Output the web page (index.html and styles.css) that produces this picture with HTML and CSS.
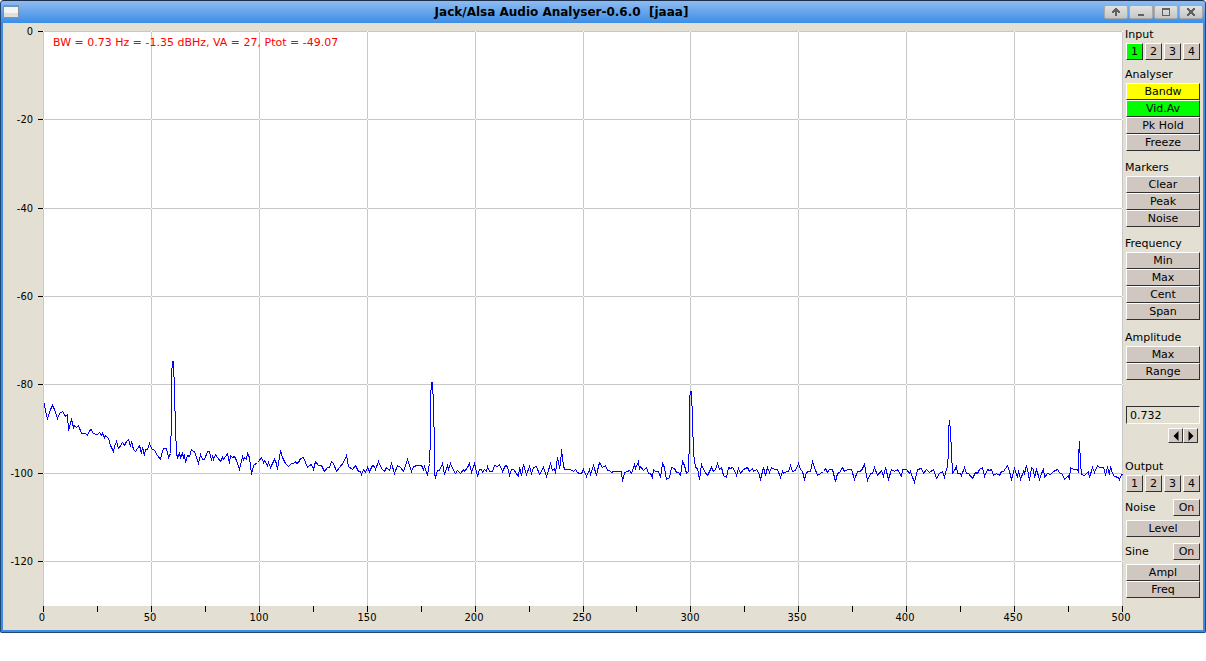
FILE: index.html
```html
<!DOCTYPE html>
<html lang="en">
<head>
    <meta charset="UTF-8">
    <meta name="viewport" content="width=device-width, initial-scale=1.0">
    <title>Jack/Alsa Audio Analyser-0.6.0 [jaaa]</title>
    <link rel="stylesheet" href="styles.css">
</head>
<body>
    <div class="window">
        <header class="titlebar">
            <svg class="app-icon" width="16" height="14" viewBox="0 0 16 14">
                <rect x="0" y="0" width="16" height="13" rx="1" fill="#8a8f94"/>
                <rect x="1" y="1" width="14" height="11" fill="#f4f4f0"/>
                <rect x="1" y="1" width="14" height="1" fill="#6b93c4"/>
                <rect x="1" y="8" width="14" height="4" fill="#dfe0da"/>
            </svg>
            <h1>Jack/Alsa Audio Analyser-0.6.0  [jaaa]</h1>
            <div class="window-buttons">
                <button type="button" aria-label="Shade">
                    <svg width="10" height="10" viewBox="0 0 10 10"><path d="M4 9V5H3v1H1V4h1V3h1V2h1V1h2v1h1v1h1v1h1v2H7V5H6v4z" fill="#606060"/></svg>
                </button>
                <button type="button" aria-label="Minimize">
                    <svg width="10" height="10" viewBox="0 0 10 10"><rect x="2" y="7" width="6" height="2" fill="#606060"/></svg>
                </button>
                <button type="button" aria-label="Maximize">
                    <svg width="10" height="10" viewBox="0 0 10 10"><path d="M1 1h8v8H1zM2 3v5h6V3z" fill="#606060" fill-rule="evenodd"/></svg>
                </button>
                <button type="button" aria-label="Close">
                    <svg width="10" height="10" viewBox="0 0 10 10"><path d="M1 1h2v1h1v1h2V2h1V1h2v2H8v1H7v2h1v1h1v2H7V8H6V7H4v1H3v1H1V7h1V6h1V4H2V3H1z" fill="#606060"/></svg>
                </button>
            </div>
        </header>

        <main class="content">
            <svg class="plot" viewBox="3 23 1120 607" role="img" aria-label="Spectrum">
                <defs>
                    <path id="dots" d="M43 0h1M151 0h1M259 0h1M367 0h1M475 0h1M583 0h1M690 0h1M798 0h1M906 0h1M1014 0h1M1122 0h1"/>
                </defs>
                <rect class="plot-area" x="43" y="31" width="1080" height="575"/>

                <!-- grid -->
                <path class="grid" d="M43 31.5H1123M43 119.5H1123M43 208.5H1123M43 296.5H1123M43 384.5H1123M43 473.5H1123M43 561.5H1123"/>
                <path class="grid" d="M43.5 31V606M151.5 31V606M259.5 31V606M367.5 31V606M475.5 31V606M583.5 31V606M690.5 31V606M798.5 31V606M906.5 31V606M1014.5 31V606M1122.5 31V606"/>
                <g class="crossings">
                    <use href="#dots" y="31.5"/>
                    <use href="#dots" y="119.5"/>
                    <use href="#dots" y="208.5"/>
                    <use href="#dots" y="296.5"/>
                    <use href="#dots" y="384.5"/>
                    <use href="#dots" y="473.5"/>
                    <use href="#dots" y="561.5"/>
                </g>

                <!-- ticks -->
                <path class="ticks" d="M38 31.5h5M38 119.5h5M38 208.5h5M38 296.5h5M38 384.5h5M38 473.5h5M38 561.5h5"/>
                <path class="ticks" d="M43.5 606v6M97.5 606v6M151.5 606v6M205.5 606v6M259.5 606v6M313.5 606v6M367.5 606v6M421.5 606v6M475.5 606v6M529.5 606v6M583.5 606v6M636.5 606v6M690.5 606v6M744.5 606v6M798.5 606v6M852.5 606v6M906.5 606v6M960.5 606v6M1014.5 606v6M1068.5 606v6M1122.5 606v6"/>

                <g class="labels-y">
                    <text x="33" y="35">0</text>
                    <text x="33" y="123">-20</text>
                    <text x="33" y="212">-40</text>
                    <text x="33" y="300">-60</text>
                    <text x="33" y="388">-80</text>
                    <text x="33" y="477">-100</text>
                    <text x="33" y="565">-120</text>
                </g>
                <g class="labels-x">
                    <text x="42" y="621">0</text>
                    <text x="150" y="621">50</text>
                    <text x="259" y="621">100</text>
                    <text x="367" y="621">150</text>
                    <text x="474" y="621">200</text>
                    <text x="582" y="621">250</text>
                    <text x="690" y="621">300</text>
                    <text x="797" y="621">350</text>
                    <text x="905" y="621">400</text>
                    <text x="1013" y="621">450</text>
                    <text x="1121" y="621">500</text>
                </g>

                <!-- spectrum trace -->
                <polyline class="trace" points="
                    43,403 44,403 45,411 47,418 50,409 52,405 54,409 57,418 59,413 62,411 64,414 65,416 67,414 68,430 71,419 73,427
                    74,425 76,427 78,425 81,433 83,433 85,433 87,435 89,430 91,429 92,432 95,434 97,434 99,432 101,435 102,433 104,437
                    105,435 108,438 110,445 113,451 114,446 116,441 118,448 119,447 122,442 124,445 126,441 128,439 130,446 131,441
                    133,449 135,451 137,448 139,445 141,453 142,447 144,455 145,449 147,449 149,443 151,448 154,450 157,455 160,459
                    162,451 163,448 166,448 168,457 170,453 171,419 171,374 172,361 173,361 174,392 175,428 176,453 177,457 179,453
                    180,457 182,453 183,457 184,455 185,462 187,455 189,456 191,449 193,451 194,451 198,463 200,454 202,459 204,459
                    207,451 209,451 211,460 212,455 213,459 215,454 217,457 220,461 222,457 223,459 227,453 229,463 230,455 232,457
                    234,456 236,460 239,469 242,456 243,459 244,457 246,459 247,453 249,457 251,474 253,465 257,462 258,461 261,457
                    263,462 264,460 267,465 268,462 270,467 274,459 276,463 277,469 280,450 282,457 285,463 288,466 291,463 293,463
                    295,461 296,463 298,462 300,458 303,457 307,467 309,465 311,464 313,469 315,461 318,465 321,465 324,471 327,467
                    329,467 331,461 333,463 336,471 339,467 343,462 346,455 348,466 352,469 355,465 358,471 360,471 361,474 363,469
                    365,472 367,467 369,471 372,465 374,466 375,469 378,461 381,468 384,471 386,467 389,470 391,463 394,473 397,465
                    400,467 403,471 407,459 411,471 413,466 417,465 421,465 423,469 424,466 427,475 429,463 430,437 430,398 431,382
                    432,382 433,405 434,447 434,473 435,477 437,470 439,470 442,463 444,474 447,465 448,469 450,463 453,470 455,473
                    457,470 460,473 463,469 464,471 467,467 469,463 471,472 474,463 475,467 477,476 479,469 481,469 482,472 484,469
                    486,471 487,466 489,471 492,471 494,465 497,466 499,464 502,471 505,465 507,466 509,475 511,469 513,469 518,476
                    519,467 521,475 523,464 526,474 529,466 531,473 533,467 536,466 539,474 543,467 546,476 547,473 550,463 552,470
                    554,468 555,473 557,457 559,467 560,464 561,449 563,465 564,469 570,469 573,471 575,469 577,472 579,473 581,473
                    583,469 586,476 589,469 590,474 593,465 596,475 597,470 599,462 602,467 605,465 607,470 609,470 611,472 613,471
                    617,471 620,471 621,471 622,481 624,472 627,471 629,470 631,473 634,464 635,468 638,461 639,469 640,466 643,470
                    646,467 648,473 650,473 652,477 653,469 655,471 658,471 660,477 662,463 664,467 666,479 669,477 671,467 674,468
                    676,472 678,472 680,475 682,461 684,465 686,473 688,471 689,437 689,398 690,391 691,391 692,419 693,453 695,467
                    697,468 699,479 701,464 704,471 707,475 711,467 713,471 715,469 717,463 719,469 721,467 723,475 726,477 728,467
                    730,468 732,467 734,470 736,475 738,468 740,473 743,469 747,467 749,471 752,468 753,471 756,469 758,472 760,479
                    763,467 765,475 767,467 769,472 771,467 774,469 777,469 780,477 782,471 783,473 786,471 788,471 790,465 792,471
                    795,470 798,463 800,469 802,471 804,479 806,472 808,471 810,471 812,461 814,467 817,475 820,473 823,471 825,468
                    827,472 829,469 832,469 835,481 837,473 839,472 842,467 844,471 847,469 849,469 851,469 854,479 857,471 859,471
                    861,470 864,464 866,475 867,480 870,473 872,473 874,467 877,475 881,470 883,476 885,467 888,479 891,469 894,471
                    897,469 898,471 901,476 902,469 905,469 906,469 909,473 910,471 914,482 917,469 921,468 923,473 926,469 929,472
                    933,469 936,478 939,473 942,471 944,477 946,468 947,467 948,451 948,429 949,420 950,431 951,451 952,473 954,470
                    956,466 957,473 960,473 961,475 964,467 966,473 968,473 972,478 975,472 977,473 979,469 982,467 984,476 987,469
                    989,470 991,469 993,475 996,473 999,475 1001,471 1003,471 1007,465 1009,471 1011,479 1014,468 1017,477 1018,470
                    1020,479 1023,471 1024,473 1026,465 1027,469 1029,480 1031,467 1033,469 1034,477 1036,469 1039,479 1043,468
                    1044,477 1047,473 1050,474 1053,471 1057,469 1059,472 1062,474 1064,479 1068,475 1069,479 1070,467 1073,469
                    1077,469 1078,472 1078,457 1079,441 1080,463 1081,474 1084,475 1088,471 1089,477 1092,467 1094,472 1097,465
                    1099,467 1103,467 1105,474 1107,467 1109,474 1110,466 1112,473 1114,476 1118,477 1119,479 1121,474 1122,474"/>

                <text class="status" x="53" y="46">BW = 0.73 Hz = -1.35 dBHz, VA = 27, Ptot = -49.07</text>
            </svg>

            <aside class="panel">
                <section class="group">
                    <h2>Input</h2>
                    <div class="channels">
                        <button type="button" class="btn green">1</button>
                        <button type="button" class="btn">2</button>
                        <button type="button" class="btn">3</button>
                        <button type="button" class="btn">4</button>
                    </div>
                </section>

                <section class="group">
                    <h2>Analyser</h2>
                    <button type="button" class="btn yellow">Bandw</button>
                    <button type="button" class="btn green">Vid.Av</button>
                    <button type="button" class="btn">Pk Hold</button>
                    <button type="button" class="btn">Freeze</button>
                </section>

                <section class="group spaced">
                    <h2>Markers</h2>
                    <button type="button" class="btn">Clear</button>
                    <button type="button" class="btn">Peak</button>
                    <button type="button" class="btn">Noise</button>
                </section>

                <section class="group spaced">
                    <h2>Frequency</h2>
                    <button type="button" class="btn">Min</button>
                    <button type="button" class="btn">Max</button>
                    <button type="button" class="btn">Cent</button>
                    <button type="button" class="btn">Span</button>
                </section>

                <section class="group amplitude">
                    <h2>Amplitude</h2>
                    <button type="button" class="btn">Max</button>
                    <button type="button" class="btn">Range</button>
                </section>

                <div class="value">
                    <input type="text" value="0.732" aria-label="Value">
                    <div class="stepper">
                        <button type="button" class="btn" aria-label="Decrease">
                            <svg width="6" height="10" viewBox="0 0 6 10"><path d="M5.500 0V10L0.500 5z"/></svg>
                        </button>
                        <button type="button" class="btn" aria-label="Increase">
                            <svg width="6" height="10" viewBox="0 0 6 10"><path d="M0.500 0V10L5.500 5z"/></svg>
                        </button>
                    </div>
                </div>

                <section class="group output">
                    <h2>Output</h2>
                    <div class="channels">
                        <button type="button" class="btn">1</button>
                        <button type="button" class="btn">2</button>
                        <button type="button" class="btn">3</button>
                        <button type="button" class="btn">4</button>
                    </div>
                </section>

                <section class="generator">
                    <div class="switch">
                        <h2>Noise</h2>
                        <button type="button" class="btn">On</button>
                    </div>
                    <button type="button" class="btn">Level</button>
                </section>

                <section class="generator">
                    <div class="switch">
                        <h2>Sine</h2>
                        <button type="button" class="btn">On</button>
                    </div>
                    <button type="button" class="btn">Ampl</button>
                    <button type="button" class="btn">Freq</button>
                </section>
            </aside>
        </main>
    </div>
</body>
</html>
```
FILE: styles.css
```css
* {
    box-sizing: border-box;
}

body {
    margin: 0;
    background-color: #fff;
    font-family: "DejaVu Sans", sans-serif;
    font-size: 11px;
    color: #000;
}

.window {
    border: 1px solid #1f4778;
    border-top-color: #1b2f4d;
    border-radius: 4px 4px 2px 2px;
    background-color: #3f8bde;
    overflow: hidden;
}

.titlebar {
    display: flex;
    align-items: center;
    height: 22px;
    padding: 0 2px;
    background: linear-gradient(#8fbcf0, #3b8ee6);
}

.titlebar h1 {
    flex: 1;
    margin: 0;
    font-size: 12px;
    font-weight: bold;
    line-height: 22px;
    text-align: center;
    white-space: pre;
}

.app-icon {
    display: block;
}

.window-buttons {
    display: flex;
    gap: 1px;
}

.window-buttons button {
    display: flex;
    align-items: center;
    justify-content: center;
    width: 24px;
    height: 14px;
    padding: 0;
    border: 1px solid #a9a9a9;
    border-radius: 2px;
    background: linear-gradient(#e2e2e2, #c6c6c6);
}

.content {
    display: flex;
    align-items: stretch;
    margin: 0 2px 2px;
    background-color: #e3dfd2;
}

/* spectrum */
.plot {
    display: block;
    flex: 1;
    min-width: 0;
    overflow: visible;
}

.plot-area {
    fill: #fff;
}

.grid,
.crossings,
.ticks,
.trace {
    fill: none;
    stroke-width: 1px;
    shape-rendering: crispEdges;
}

.grid {
    stroke: #c8c8c8;
}

.crossings {
    stroke: #fff;
}

.ticks {
    stroke: #000;
}

.trace {
    stroke: #00f;
    transform: translate(0.5px, 0.5px);
}

.labels-x,
.labels-y {
    font-family: "DejaVu Sans Condensed", "DejaVu Sans", sans-serif;
    font-size: 11px;
}

.labels-x {
    text-anchor: middle;
}

.labels-y {
    text-anchor: end;
}

.status {
    fill: #f00;
}

/* control panel */
.panel {
    width: 80px;
    padding: 4px 3px 0;
}

.panel h2 {
    margin: 0 0 0 -1px;
    font-size: 11px;
    font-weight: normal;
    line-height: 16px;
}

.group {
    margin-bottom: 7px;
}

.spaced {
    padding-top: 2px;
}

.amplitude {
    margin-bottom: 26px;
    padding-top: 3px;
}

.btn {
    display: flex;
    align-items: center;
    justify-content: center;
    width: 100%;
    height: 17px;
    padding: 0;
    border: 1px solid;
    border-color: #fff #303030 #303030 #fff;
    background-color: #d0c8c0;
    color: #000;
    font-family: inherit;
    font-size: 11px;
    line-height: 15px;
}

.green {
    background-color: #0f0;
}

.yellow {
    background-color: #ff0;
}

.channels {
    display: flex;
    gap: 2px;
}

.value input {
    display: block;
    width: 100%;
    height: 18px;
    padding: 0 3px;
    border: 1px solid;
    border-color: #303030 #fff #fff #303030;
    background-color: #e3dfd2;
    font-family: inherit;
    font-size: 11px;
}

.stepper {
    display: flex;
    justify-content: flex-end;
    margin: 4px 2px 0 0;
}

.stepper .btn {
    width: 15px;
    height: 15px;
}

.output {
    margin-top: 16px;
}

.generator {
    margin-bottom: 6px;
}

.switch {
    display: flex;
    align-items: center;
    justify-content: space-between;
    margin-bottom: 4px;
}

.switch .btn {
    width: 27px;
}
```
